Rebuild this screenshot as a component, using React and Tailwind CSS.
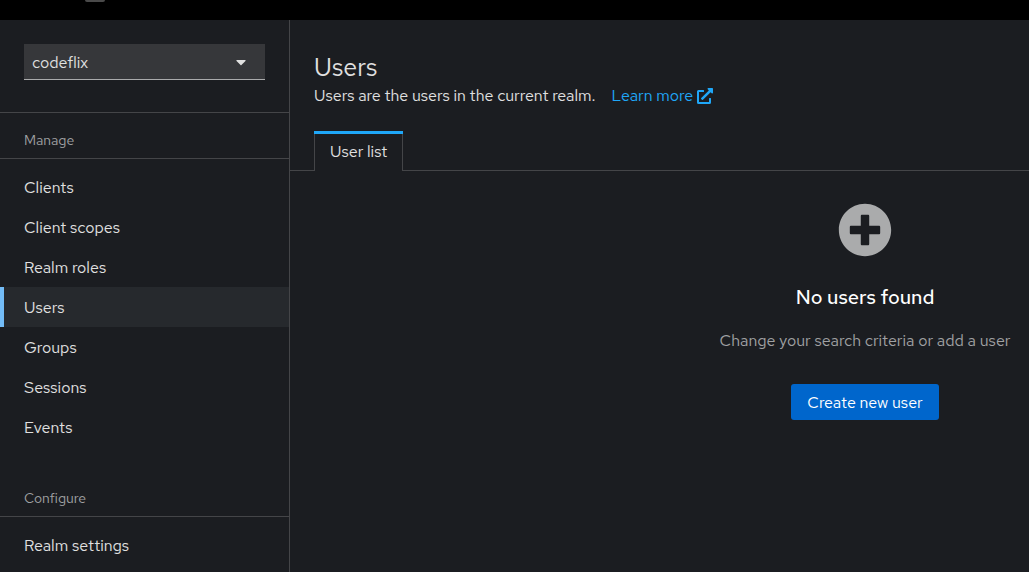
import { FaCaretDown, FaExternalLinkAlt, FaPlusCircle } from "react-icons/fa";

const manageLinks = ["Clients", "Client scopes", "Realm roles", "Users", "Groups", "Sessions", "Events"];
const configureLinks = ["Realm settings"];

function NavSection({ title, links, current }) {
  return (
    <section>
      <h2 className="border-b border-[#444548] px-6 pt-[17px] pb-[7px] text-sm leading-[21px] text-[#a0a1a3]">{title}</h2>
      <ul className="pt-2">
        {links.map((link) => (
          <li key={link}>
            <a
              href="#"
              aria-current={link === current ? "page" : undefined}
              className={
                link === current
                  ? "block border-l-4 border-[#73bcf7] bg-[#26292d] pt-[9px] pr-6 pb-[7px] pl-5 leading-6"
                  : "block border-l-4 border-transparent pt-[9px] pr-6 pb-[7px] pl-5 leading-6"
              }
            >
              {link}
            </a>
          </li>
        ))}
      </ul>
    </section>
  );
}

export default function App() {
  return (
    <div className="flex h-screen flex-col overflow-hidden bg-[#1b1d21] font-['Red_Hat_Text','Lato',sans-serif] text-base text-[#e0e0e0]">
      <header className="h-5 shrink-0 bg-black pl-[85px]">
        <div className="h-0.5 w-5 rounded-b-sm bg-[#4a4a4a]" />
      </header>
      <div className="flex min-h-0 flex-1">
        <nav aria-label="Global" className="w-[290px] shrink-0 overflow-hidden border-r border-[#444548]">
          <div className="border-b border-[#444548] px-6 pt-6 pb-8">
            <div className="relative">
              <select
                aria-label="Realm"
                className="block h-9 w-full appearance-none border-b border-[#aaabac] bg-[#36373a] pt-0.5 pr-8 pl-2"
              >
                <option>codeflix</option>
              </select>
              <FaCaretDown aria-hidden="true" className="pointer-events-none absolute top-2.5 right-4 size-4" />
            </div>
          </div>
          <NavSection title="Manage" links={manageLinks} current="Users" />
          <div className="pt-6">
            <NavSection title="Configure" links={configureLinks} />
          </div>
        </nav>
        <main className="min-w-[1150px] flex-1">
          <div className="px-6 pt-8">
            <h1 className="text-[25px] leading-8">Users</h1>
            <div className="flex gap-4 leading-6">
              <p>Users are the users in the current realm.</p>
              <a href="#" className="flex items-center gap-1 text-[#1fa7f8]">
                Learn more
                <FaExternalLinkAlt aria-hidden="true" className="size-4" />
              </a>
            </div>
          </div>
          <div role="tablist" className="mt-[23px] flex border-b border-[#444548] px-6">
            <button
              type="button"
              role="tab"
              aria-selected="true"
              className="relative -mb-px border-x border-[#444548] bg-[#1b1d21]"
            >
              <span className="absolute -inset-x-px top-0 h-[3px] bg-[#1fa7f8]" />
              <span className="block px-[15px] pt-[9px] pb-[7px] leading-6">User list</span>
            </button>
          </div>
          <section className="flex flex-col items-center pt-8 text-center">
            <FaPlusCircle aria-hidden="true" className="size-[54px] text-[#aaabac]" />
            <h2 className="mt-[25px] text-xl leading-[30px] font-medium text-white">No users found</h2>
            <p className="mt-[17px] leading-6 text-[#a0a1a3]">Change your search criteria or add a user</p>
            <button type="button" className="mt-[31px] rounded-[3px] bg-[#0066cc] px-4 pt-[7px] pb-[5px] leading-6 text-white">
              Create new user
            </button>
          </section>
        </main>
      </div>
    </div>
  );
}
